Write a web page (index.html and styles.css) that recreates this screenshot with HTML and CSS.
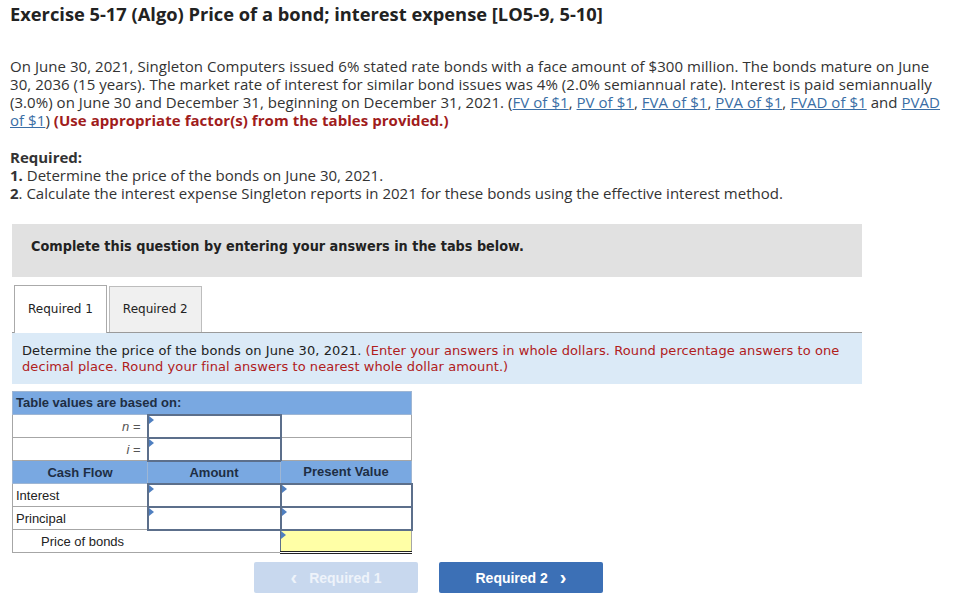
FILE: index.html
```html
<!DOCTYPE html>
<html>
<head>
<meta charset="utf-8">
<link rel="stylesheet" href="styles.css">
</head>
<body>
<div class="page">
  <h1 class="title">Exercise 5-17 (Algo) Price of a bond; interest expense [LO5-9, 5-10]</h1>
  <p class="intro">On June 30, 2021, Singleton Computers issued 6% stated rate bonds with a face amount of $300 million. The bonds mature on June 30, 2036 (15 years). The market rate of interest for similar bond issues was 4% (2.0% semiannual rate). Interest is paid semiannually (3.0%) on June 30 and December 31, beginning on December 31, 2021. (<a href="#">FV of $1</a>, <a href="#">PV of $1</a>, <a href="#">FVA of $1</a>, <a href="#">PVA of $1</a>, <a href="#">FVAD of $1</a> and <a href="#">PVAD of $1</a>) <strong class="warn">(Use appropriate factor(s) from the tables provided.)</strong></p>
  <div class="required">
    <div class="req-head">Required:</div>
    <div><b>1.</b> Determine the price of the bonds on June 30, 2021.</div>
    <div><b>2</b>. Calculate the interest expense Singleton reports in 2021 for these bonds using the effective interest method.</div>
  </div>
  <div class="notice">Complete this question by entering your answers in the tabs below.</div>
  <div class="tabs">
    <div class="tab active">Required 1</div>
    <div class="tab">Required 2</div>
  </div>
  <div class="instructions">Determine the price of the bonds on June 30, 2021. <span class="red">(Enter your answers in whole dollars. Round percentage answers to one decimal place. Round your final answers to nearest whole dollar amount.)</span></div>
  <table class="pv">
    <tr><th colspan="3" class="left">Table values are based on:</th></tr>
    <tr><td class="c1 right"><i>n</i> =</td><td class="c2 input"><span class="flag"></span></td><td class="c3"></td></tr>
    <tr><td class="c1 right"><i>i</i> =</td><td class="c2 input"><span class="flag"></span></td><td class="c3"></td></tr>
    <tr><th class="c1">Cash Flow</th><th class="c2">Amount</th><th class="c3">Present Value</th></tr>
    <tr><td class="c1">Interest</td><td class="c2 input"><span class="flag"></span></td><td class="c3 input"><span class="flag"></span></td></tr>
    <tr><td class="c1">Principal</td><td class="c2 input"><span class="flag"></span></td><td class="c3 input"><span class="flag"></span></td></tr>
    <tr><td class="indent" colspan="2">Price of bonds</td><td class="c3 total"><span class="flag"></span></td></tr>
  </table>
  <div class="nav">
    <button class="btn prev" disabled><span class="chev">&lsaquo;</span>Required 1</button>
    <button class="btn next">Required 2<span class="chev">&rsaquo;</span></button>
  </div>
</div>
</body>
</html>
```

FILE: styles.css
```css
html, body {
  margin: 0;
  padding: 0;
  background: #fff;
}
.page {
  padding: 0 0 0 10px;
  width: 940px;
  font-family: "Open Sans", Lato, sans-serif;
  color: #333;
}
.title {
  margin: 4px 0 0 0;
  font-size: 18.3px;
  line-height: 20px;
  font-weight: 700;
  color: #222;
}
.intro {
  margin: 33px 0 0 0;
  font-size: 15px;
  line-height: 18px;
  width: 935px;
  letter-spacing: 0.05px;
}
.intro a {
  color: #3a6ea5;
  text-decoration: underline;
}
.warn {
  color: #a01c1c;
  font-weight: 700;
}
.required {
  margin-top: 19px;
  font-size: 15px;
  line-height: 18px;
}
.req-head {
  font-weight: 700;
}
.notice {
  margin: 22px 0 0 2px;
  width: 850px;
  height: 53px;
  box-sizing: border-box;
  padding: 13px 0 0 19px;
  background: #e1e1e1;
  font-family: "DejaVu Sans Condensed", "DejaVu Sans", sans-serif;
  font-weight: 700;
  font-size: 14.3px;
  line-height: 18px;
  color: #222;
}
.tabs {
  display: flex;
  gap: 2px;
  margin: 8px 0 0 2px;
  width: 850px;
  padding-left: 2px;
  box-sizing: border-box;
  border-bottom: 1px solid #9a9a9a;
  align-items: flex-end;
}
.tab {
  font-family: "DejaVu Sans", sans-serif;
  font-size: 12px;
  color: #222;
  height: 45px;
  line-height: 45px;
  padding: 0 13px;
  border: 1px solid #bdbdbd;
  border-bottom: none;
  background: #f0f0f0;
}
.tab.active {
  background: #fff;
  height: 47px;
  line-height: 47px;
  margin-bottom: -1px;
  border-color: #aaa;
}
.instructions {
  margin-left: 2px;
  width: 850px;
  box-sizing: border-box;
  padding: 10px 10px 9px 10px;
  background: #dbeaf7;
  font-family: "DejaVu Sans", sans-serif;
  font-size: 13px;
  line-height: 16px;
  letter-spacing: 0.08px;
  color: #222;
}
.red {
  color: #b0201c;
}
.pv {
  margin: 7px 0 0 2px;
  border-collapse: collapse;
  font-family: "Liberation Sans", Arial, sans-serif;
  font-size: 13px;
  color: #222;
}
.pv td, .pv th {
  border: 1px solid #a6a6a6;
  height: 23px;
  padding: 0 3px;
  box-sizing: border-box;
  position: relative;
}
.pv .c1 { width: 135px; }
.pv .c2 { width: 133px; }
.pv .c3 { width: 131px; }
.pv th {
  background: #79a8e1;
  color: #1e2e44;
  font-weight: 700;
  text-align: center;
  border-color: #9eb6d4;
}
.pv th.left {
  text-align: left;
}
.pv td.right {
  text-align: right;
  color: #555;
  padding-right: 6px;
}
.pv td.indent {
  padding-left: 28px;
  border-right-color: #5c6f8b;
}
.pv td.input {
  border: 2px solid #5c6f8b;
}
.pv td.total {
  background: #ffffa6;
  border-top: 2px solid #2a3550;
  border-bottom: 3px double #222;
}
.flag {
  position: absolute;
  left: 0;
  top: 0;
  width: 0;
  height: 0;
  border-top: 4px solid transparent;
  border-bottom: 4px solid transparent;
  border-left: 5px solid #4f7fc0;
}
.nav {
  display: flex;
  gap: 21px;
  margin: 8px 0 0 244px;
}
.btn {
  width: 164px;
  height: 31px;
  border: none;
  border-radius: 2px;
  font-family: "Liberation Sans", Arial, sans-serif;
  font-size: 14px;
  font-weight: 700;
  color: #fff;
  display: flex;
  align-items: center;
  justify-content: center;
  gap: 12px;
}
.btn.prev {
  background: #c8d8ee;
  color: #eef3fa;
}
.btn.next {
  background: #3c70b6;
}
.chev {
  font-size: 20px;
  line-height: 20px;
  position: relative;
  top: -1px;
}
```
